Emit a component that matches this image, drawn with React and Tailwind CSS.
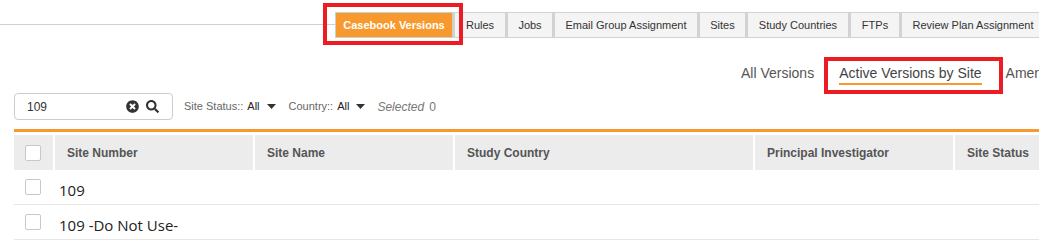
import { FaSearch, FaTimesCircle } from "react-icons/fa"

const tabs = [
  { label: "Rules", w: "w-[53px]" },
  { label: "Jobs", w: "w-[47px]" },
  { label: "Email Group Assignment", w: "w-[145px]" },
  { label: "Sites", w: "w-[48px]" },
  { label: "Study Countries", w: "w-[103px]" },
  { label: "FTPs", w: "w-[51px]" },
  { label: "Review Plan Assignment", w: "w-[145px]" },
]

const columns = [
  { label: "Site Number", w: "w-[200px]" },
  { label: "Site Name", w: "w-[200px]" },
  { label: "Study Country", w: "w-[300px]" },
  { label: "Principal Investigator", w: "w-[200px]" },
  { label: "Site Status", w: "w-[200px]" },
]

const rows = ["109", "109 -Do Not Use-"]

const Caret = () => (
  <svg width="9" height="5" viewBox="0 0 9 5" className="ml-[7px]">
    <path d="M0 0h9L4.5 5z" fill="#333" />
  </svg>
)

const Checkbox = () => (
  <span className="block h-4 w-4 rounded-[2px] border border-[#c8c8c8] bg-white" />
)

export default function App() {
  return (
    <div className="h-[247px] w-[1039px] overflow-hidden bg-white font-['Liberation_Sans',Arial,sans-serif]">
      {/* top tabs */}
      <div className="flex h-[50px] items-start pt-3">
        <div className="mt-[12px] h-px w-[335px] shrink-0 bg-[#cfcfcf]" />
        <div className="relative shrink-0">
          <div className="flex h-[26px] w-[118px] items-center justify-center border border-[#cfcfcf] bg-[#f8992d] text-[11px] font-bold text-white">
            Casebook Versions
          </div>
          <span className="pointer-events-none absolute -top-[9px] -bottom-[7px] -left-[12px] -right-[10px] border-4 border-[#ec1c24]" />
        </div>
        {tabs.map((t) => (
          <div
            key={t.label}
            className={`flex h-[26px] shrink-0 items-center justify-center whitespace-nowrap border border-l-2 border-[#d2d2d2] bg-[#f4f4f4] text-[11px] text-[#333] ${t.w}`}
          >
            {t.label}
          </div>
        ))}
      </div>

      {/* version tabs */}
      <div className="flex h-[38px] whitespace-nowrap pl-[741px] pt-[13px] text-[14px] text-[#555]">
        <span className="leading-[20px]">All Versions</span>
        <div className="relative ml-[25px]">
          <span className="block border-b-2 border-[#f8992d] leading-[20px] text-[#444]">Active Versions by Site</span>
          <span className="pointer-events-none absolute -top-[6px] -bottom-[6px] -left-[15px] -right-[21px] border-4 border-[#ec1c24]" />
        </div>
        <span className="ml-[24px] leading-[20px]">Amendments</span>
      </div>

      {/* toolbar */}
      <div className="flex h-[41px] items-start whitespace-nowrap pl-[14px] pt-[5px]">
        <div className="flex h-[27px] w-[159px] items-center rounded-[4px] border border-[#cccccc] pl-[12px] pr-[13px] text-[12px] text-[#333]">
          <span className="flex-1">109</span>
          <FaTimesCircle className="h-[13px] w-[13px] text-[#333]" />
          <FaSearch className="ml-[7px] h-[13px] w-[13px] text-[#333]" />
        </div>
        <div className="flex h-[27px] items-center text-[11px]">
          <span className="ml-[11px] text-[#666]">Site Status::</span>
          <span className="ml-[4px] text-[#222]">All</span>
          <Caret />
          <span className="ml-[13px] text-[#666]">Country::</span>
          <span className="ml-[4px] text-[#222]">All</span>
          <Caret />
          <span className="ml-[12px] text-[12px] italic text-[#777]">Selected</span>
          <span className="ml-[5px] text-[12px] text-[#777]">0</span>
        </div>
      </div>

      {/* table */}
      <div className="ml-[14px]">
        <div className="h-[3px] bg-[#f8992d]" />
        <div className="mt-[3px] flex h-[35px] bg-[#ececec]">
          <div className="flex w-[39px] shrink-0 items-center pl-[11px]">
            <Checkbox />
          </div>
          {columns.map((c) => (
            <div
              key={c.label}
              className={`flex shrink-0 items-center border-l-2 border-white pl-[12px] text-[12px] font-bold text-[#555] ${c.w}`}
            >
              {c.label}
            </div>
          ))}
        </div>
        {rows.map((r) => (
          <div key={r} className="flex h-[35px] items-center border-b border-[#e6e6e6]">
            <div className="flex w-[39px] shrink-0 items-center pl-[11px]">
              <Checkbox />
            </div>
            <span className="pl-[6px] pt-[6px] font-['Open_Sans','Noto_Sans',sans-serif] text-[15px] text-[#222]">{r}</span>
          </div>
        ))}
      </div>
    </div>
  )
}
